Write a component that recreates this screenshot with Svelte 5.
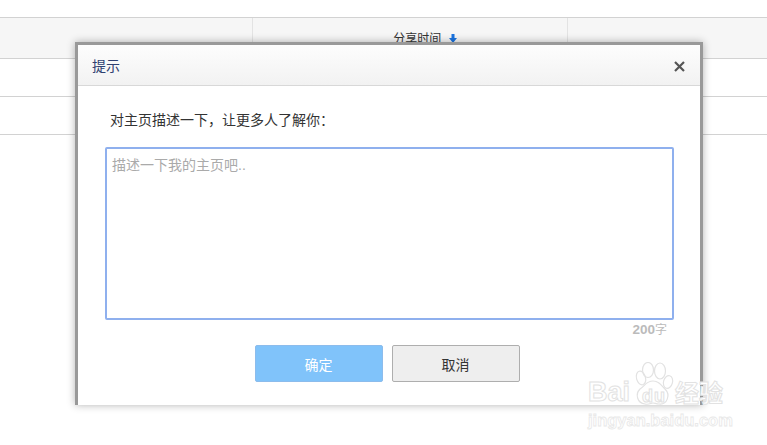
<script>
  const rows = [0, 1];
</script>

<div class="page">
  <div class="table">
    <div class="thead">
      <div class="th"></div>
      <div class="th center">
        <span class="label">分享时间</span>
        <svg class="arrow" width="8" height="9" viewBox="0 0 8 9"><path d="M2.500 0h3v4H8L4 9 0 4h2.500z" fill="#1a73e0"/></svg>
      </div>
      <div class="th"></div>
    </div>
    {#each rows as r}
      <div class="row"></div>
    {/each}
  </div>

  <div class="dialog">
    <header class="head">
      <span class="title">提示</span>
      <svg class="close" width="11" height="11" viewBox="0 0 11 11"><path d="M1 1l9 9M10 1l-9 9" stroke="#555" stroke-width="2.200" fill="none"/></svg>
    </header>
    <div class="body">
      <p class="prompt">对主页描述一下，让更多人了解你：</p>
      <div class="area">描述一下我的主页吧..</div>
      <div class="count"><b>200</b>字</div>
      <div class="actions">
        <button class="btn ok">确定</button>
        <button class="btn cancel">取消</button>
      </div>
    </div>
  </div>

  <div class="mark">
    <div class="mark-top">
      <span class="bai">Bai</span>
      <svg class="paw" width="44" height="46" viewBox="0 0 44 46">
        <g fill="none" stroke="#e2e2e2" stroke-width="1.200">
          <ellipse cx="9" cy="16" rx="4.500" ry="7" transform="rotate(-15 9 16)"/>
          <ellipse cx="16" cy="8" rx="5.500" ry="7.500"/>
          <ellipse cx="28" cy="9" rx="5.500" ry="8"/>
          <ellipse cx="36" cy="20" rx="4.500" ry="6.500" transform="rotate(15 36 20)"/>
          <path d="M21 19c6 0 8 4 12 8 6 6 2 16-6 15-3 0-4-1-6-1s-4 2-8 1C5 41 3 32 8 27c5-3 6-8 13-8z"/>
        </g>
      </svg>
      <span class="du">du</span>
      <span class="jy">经验</span>
    </div>
    <div class="mark-url">jingyan.baidu.com</div>
  </div>
</div>

<style>
  :global(body) {
    margin: 0;
    background: #fff;
    font-family: "Liberation Sans", "Noto Sans CJK SC", sans-serif;
  }
  .page {
    position: relative;
    width: 767px;
    height: 445px;
    overflow: hidden;
    padding-top: 17px;
    box-sizing: border-box;
  }
  .table {
    border-top: 1px solid #d2d2d2;
  }
  .thead {
    display: grid;
    grid-template-columns: 253px 315px 199px;
    height: 40px;
    background: #f6f6f6;
    border-bottom: 1px solid #d2d2d2;
  }
  .th {
    border-right: 1px solid #e3e3e3;
    text-align: center;
    font-size: 12px;
    line-height: 43px;
    color: #333;
  }
  .th:last-child { border-right: 0; }
  .center { white-space: nowrap; }
  .label { margin-left: 30px; }
  .arrow { margin-left: 4px; vertical-align: 0; }
  .row {
    height: 37px;
    border-bottom: 1px solid #d2d2d2;
  }
  .dialog {
    position: absolute;
    left: 75px;
    top: 42px;
    width: 622px;
    height: 360px;
    background: #fff;
    border: 3px solid #999;
    border-bottom: 0;
    box-shadow: 0 0 8px rgba(0, 0, 0, 0.3);
  }
  .head {
    display: flex;
    align-items: center;
    justify-content: space-between;
    box-sizing: border-box;
    height: 41px;
    padding: 0 15px 0 14px;
    background: linear-gradient(#fdfdfd, #f2f2f2);
    border-bottom: 1px solid #d8d8d8;
  }
  .title {
    font-size: 14px;
    color: #2f4070;
  }
  .close { margin-top: 3px; }
  .body {
    padding: 0 28px;
  }
  .prompt {
    margin: 0;
    padding: 25px 0 0 4px;
    height: 36px;
    box-sizing: content-box;
    font-size: 14px;
    line-height: 18px;
    color: #333;
  }
  .area {
    box-sizing: border-box;
    width: 569px;
    height: 173px;
    margin-left: -1px;
    border: 2px solid #8fb0ee;
    border-radius: 2px;
    padding: 7px 5px;
    font-size: 14px;
    line-height: 18px;
    color: #aaa;
  }
  .count {
    width: 561px;
    text-align: right;
    font-size: 12px;
    line-height: 20px;
    color: #bbb;
  }
  .count b { font-size: 13.500px; }
  .actions {
    display: flex;
    justify-content: center;
    gap: 9px;
    padding-top: 5px;
    margin-left: -3px;
    width: 568px;
  }
  .btn {
    box-sizing: border-box;
    width: 128px;
    height: 37px;
    border-radius: 2px;
    font: inherit;
    font-size: 14px;
    padding: 0;
  }
  .ok {
    background: #80c3fa;
    border: 1px solid #8cbcec;
    color: #fff;
  }
  .cancel {
    background: #eee;
    border: 1px solid #aeaeae;
    color: #333;
  }
  .mark {
    position: absolute;
    left: 588px;
    top: 362px;
    width: 136px;
    pointer-events: none;
  }
  .mark-top {
    position: relative;
    height: 49px;
    color: #fff;
    font-weight: bold;
    -webkit-text-stroke: 1px #e2e2e2;
  }
  .bai {
    position: absolute;
    left: 0;
    top: 15px;
    font-size: 27px;
    line-height: 30px;
  }
  .paw {
    position: absolute;
    left: 44px;
    top: 0;
  }
  .du {
    position: absolute;
    left: 54px;
    top: 25px;
    font-size: 18px;
    line-height: 18px;
    letter-spacing: 1px;
  }
  .jy {
    position: absolute;
    left: 87px;
    top: 20px;
    font-size: 24px;
    line-height: 24px;
    white-space: nowrap;
  }
  .mark-url {
    font-size: 16.500px;
    line-height: 18px;
    font-weight: bold;
    color: #fff;
    -webkit-text-stroke: 0.800px #e8e8e8;
    white-space: nowrap;
  }
</style>
